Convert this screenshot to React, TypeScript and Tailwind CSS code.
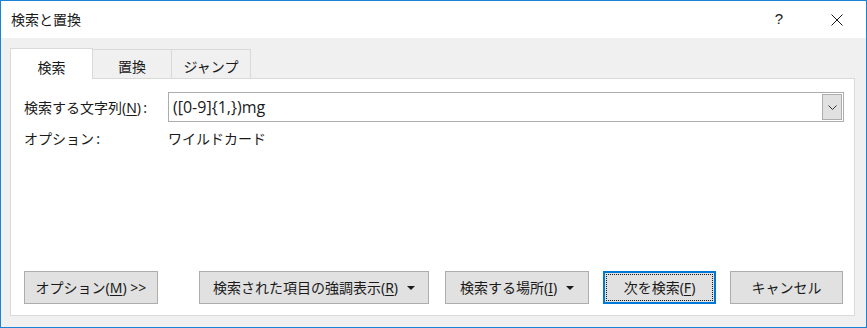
import React from "react";

const FONT = "font-['Noto_Sans','Noto_Sans_CJK_JP',sans-serif]";

function Caret() {
  return <span className="ml-[9px] inline-block h-0 w-0 border-x-[4px] border-t-[4px] border-x-transparent border-t-[#1a1a1a] align-middle" />;
}

function Btn({ children, className = "" }: { children: React.ReactNode; className?: string }) {
  return (
    <button className={`flex h-[33px] shrink-0 items-center justify-center border border-[#adadad] bg-[#e1e1e1] text-[14px] text-[#1a1a1a] ${className}`}>
      {children}
    </button>
  );
}

export default function App() {
  return (
    <div className={`flex h-[328px] w-[867px] flex-col border border-[#1883d7] bg-[#f0f0f0] text-[#1a1a1a] ${FONT}`}>
      {/* title bar */}
      <div className="flex h-[37px] shrink-0 items-center bg-white">
        <span className="ml-[10px] text-[14px]">検索と置換</span>
        <span className="ml-auto mr-[48px] text-[15px] font-['Liberation_Sans',sans-serif]">?</span>
        <svg width="12" height="12" viewBox="0 0 12 12" className="mr-[23px]">
          <path d="M0.5 0.5 L11.5 11.5 M11.5 0.5 L0.5 11.5" stroke="#1a1a1a" strokeWidth="1" />
        </svg>
      </div>

      <div className="flex flex-1 flex-col pl-[9px] pr-[11px] pt-[10px] pb-[11px]">
        {/* tabs */}
        <div className="flex h-[30px] items-end">
          <div className="relative z-10 -mb-px flex h-[31px] w-[83px] items-center justify-center border border-b-0 border-[#d9d9d9] bg-white pt-[6px] text-[14px]">
            検索
          </div>
          <div className="flex h-[29px] w-[79px] items-center justify-center border border-l-0 border-b-0 border-[#d9d9d9] pt-[4px] text-[14px]">
            置換
          </div>
          <div className="flex h-[29px] w-[79px] items-center justify-center border border-l-0 border-b-0 border-[#d9d9d9] pt-[4px] text-[14px]">
            ジャンプ
          </div>
        </div>

        {/* panel */}
        <div className="flex flex-1 flex-col border border-[#d9d9d9] bg-white pt-[13px] pb-[11px]">
          <div className="flex items-center">
            <span className="ml-[13px] w-[144px] text-[14px]">
              検索する文字列(<span className="underline underline-offset-2">N</span>)&thinsp;:
            </span>
            <div className="flex h-[30px] w-[676px] items-stretch border border-[#adadad] bg-white">
              <span className="flex flex-1 items-center pl-[4px] text-[16px] font-['Open_Sans',sans-serif]">([0-9]{"{"}1,{"}"})mg</span>
              <div className="m-[1px] flex w-[20px] items-center justify-center border border-[#adadad] bg-[#e1e1e1]">
                <svg width="9" height="5" viewBox="0 0 9 5">
                  <path d="M0.5 0.5 L4.5 4.5 L8.5 0.5" fill="none" stroke="#333" strokeWidth="1" />
                </svg>
              </div>
            </div>
          </div>

          <div className="mt-[6px] flex items-center text-[14px]">
            <span className="ml-[13px] w-[144px]">オプション&thinsp;:</span>
            <span>ワイルドカード</span>
          </div>

          <div className="flex-1" />

          <div className="flex items-center">
            <Btn className="ml-[13px] w-[134px]">
              オプション(<span className="underline underline-offset-2">M</span>)&nbsp;&gt;&gt;
            </Btn>
            <Btn className="ml-[41px] w-[230px]">
              検索された項目の強調表示(<span className="underline underline-offset-2">R</span>)
              <Caret />
            </Btn>
            <Btn className="ml-[16px] w-[144px]">
              検索する場所(<span className="underline underline-offset-2">I</span>)
              <Caret />
            </Btn>
            <button className="ml-[14px] flex h-[33px] w-[113px] shrink-0 items-center justify-center border-2 border-[#0078d7] bg-[#e1e1e1] p-[1px]">
              <span className="flex h-full w-full items-center justify-center border border-dotted border-[#1a1a1a] text-[14px]">
                次を検索(<span className="underline underline-offset-2">F</span>)
              </span>
            </button>
            <Btn className="ml-[14px] w-[113px]">キャンセル</Btn>
          </div>
        </div>
      </div>
    </div>
  );
}
